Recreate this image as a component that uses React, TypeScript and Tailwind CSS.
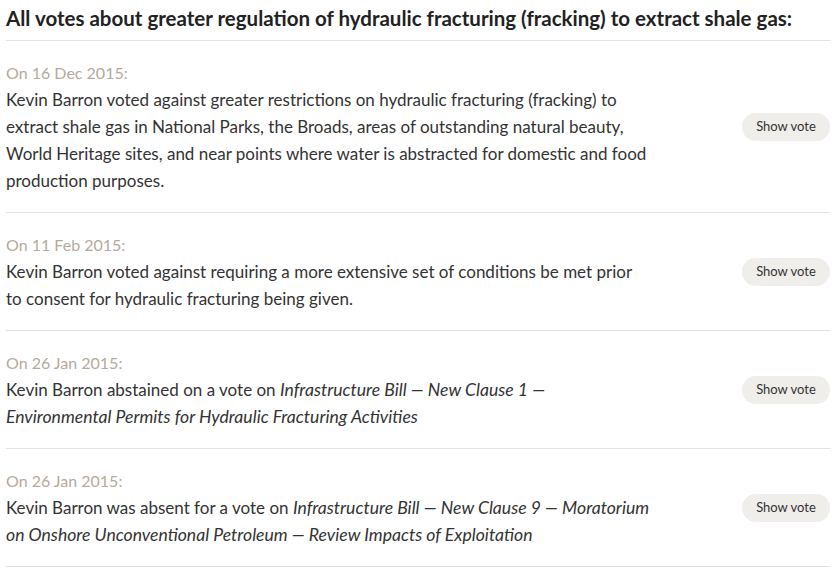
import React from "react";

type Vote = { date: string; body: React.ReactNode };

const I = ({ children }: { children: React.ReactNode }) => <i className="text-[17.6px]">{children}</i>;

const votes: Vote[] = [
  {
    date: "On 16 Dec 2015:",
    body: (
      <>
        Kevin Barron voted against greater restrictions on hydraulic fracturing (fracking) to
        <br />
        extract shale gas in National Parks, the Broads, areas of outstanding natural beauty,
        <br />
        World Heritage sites, and near points where water is abstracted for domestic and food
        <br />
        production purposes.
      </>
    ),
  },
  {
    date: "On 11 Feb 2015:",
    body: (
      <>
        Kevin Barron voted against requiring a more extensive set of conditions be met prior
        <br />
        to consent for hydraulic fracturing being given.
      </>
    ),
  },
  {
    date: "On 26 Jan 2015:",
    body: (
      <>
        Kevin Barron abstained on a vote on <I>Infrastructure Bill — New Clause 1 —</I>
        <br />
        <I>Environmental Permits for Hydraulic Fracturing Activities</I>
      </>
    ),
  },
  {
    date: "On 26 Jan 2015:",
    body: (
      <>
        Kevin Barron was absent for a vote on <I>Infrastructure Bill — New Clause 9 — Moratorium</I>
        <br />
        <I>on Onshore Unconventional Petroleum — Review Impacts of Exploitation</I>
      </>
    ),
  },
];

export default function App() {
  return (
    <div
      className="w-[840px] h-[569px] bg-white pl-[6px] pr-[10px] overflow-hidden text-[#333333]"
      style={{ fontFamily: "Lato, 'Noto Sans', sans-serif" }}
    >
      <h2 className="text-[20.5px] font-bold leading-[36px] pb-[4px] border-b border-[#e4e2dd] text-[#222222]">
        All votes about greater regulation of hydraulic fracturing (fracking) to extract shale gas:
      </h2>
      {votes.map((v, i) => (
        <div key={i} className="flex items-center justify-between py-[18px] border-b border-[#e4e2dd]">
          <div className="w-[700px] text-[17px] leading-[27px] whitespace-nowrap">
            <div className="text-[16px] text-[#b5aa9d]">{v.date}</div>
            <div>{v.body}</div>
          </div>
          <button className="h-[28px] w-[88px] rounded-full bg-[#f0eeea] text-[13px] text-[#333333]">
            Show vote
          </button>
        </div>
      ))}
    </div>
  );
}
